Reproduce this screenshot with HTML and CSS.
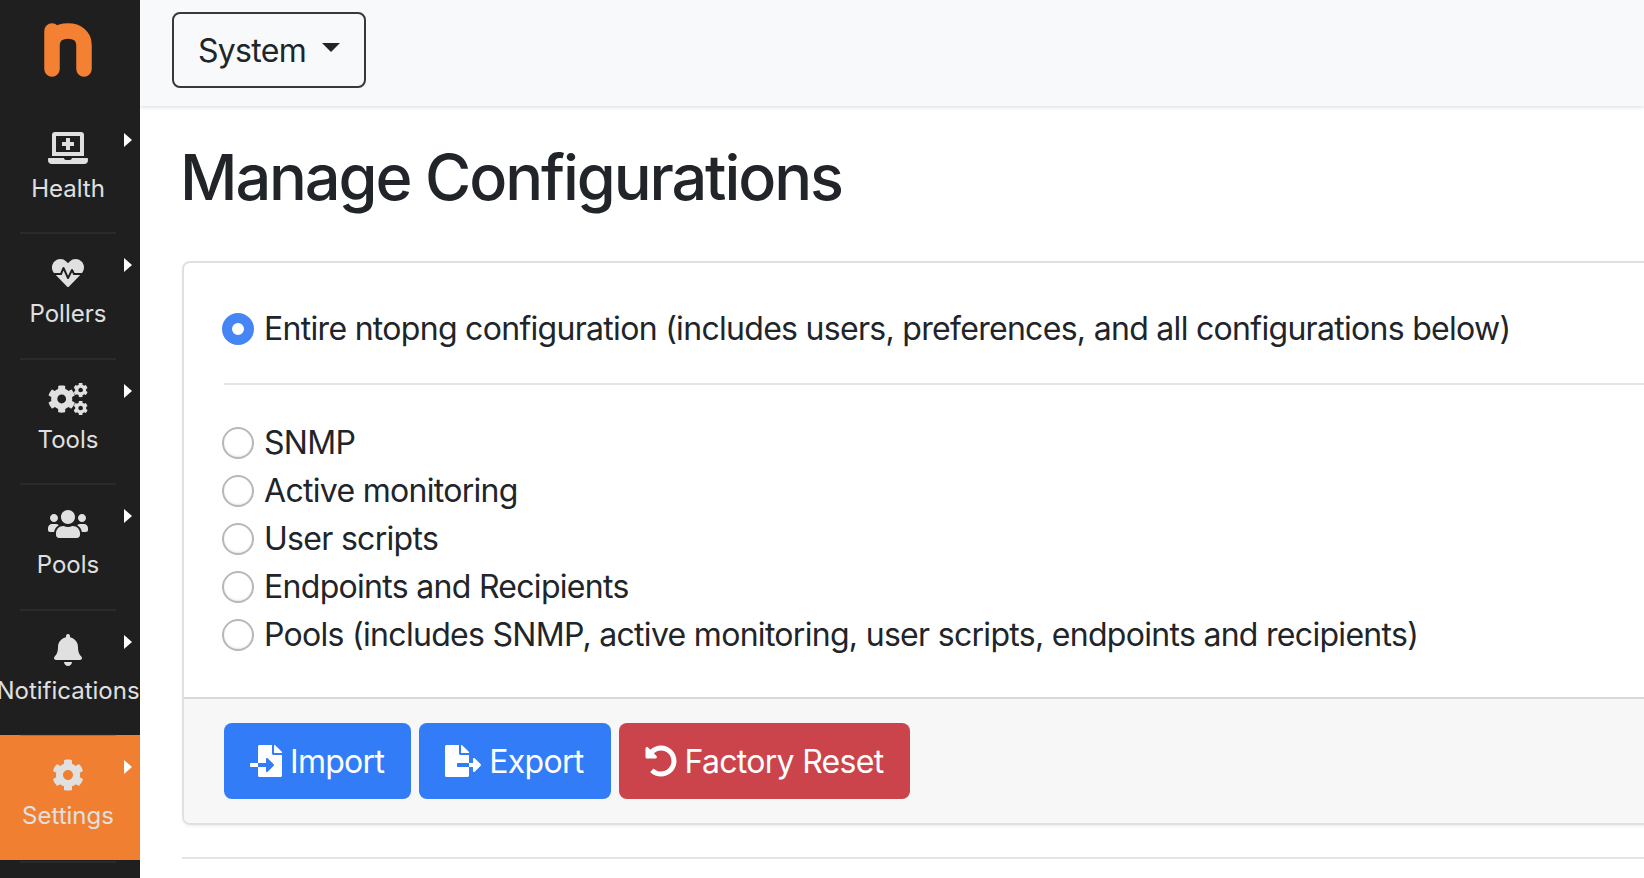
FILE: index.html
```html
<!DOCTYPE html>
<html lang="en">
<head>
    <meta charset="UTF-8">
    <meta name="viewport" content="width=device-width, initial-scale=1.0">
    <title>Manage Configurations</title>
    <link rel="stylesheet" href="styles.css">
</head>
<body>
    <svg class="defs" width="0" height="0">
        <symbol id="cog" viewBox="0 0 512 512"><path d="M487.4 315.7l-42.6-24.6c4.3-23.2 4.3-47 0-70.2l42.6-24.6c4.9-2.8 7.1-8.6 5.5-14-11.1-35.6-30-67.8-54.7-94.6-3.8-4.1-10-5.1-14.8-2.3L380.8 110c-17.9-15.4-38.5-27.3-60.8-35.1V25.8c0-5.6-3.9-10.5-9.4-11.7-36.7-8.2-74.3-7.8-109.2 0-5.5 1.2-9.4 6.1-9.4 11.7V75c-22.2 7.9-42.8 19.8-60.8 35.1L88.7 85.5c-4.9-2.8-11-1.9-14.8 2.3-24.7 26.7-43.6 58.9-54.7 94.6-1.7 5.4.6 11.2 5.5 14L67.3 221c-4.3 23.2-4.3 47 0 70.2l-42.6 24.6c-4.9 2.8-7.1 8.6-5.5 14 11.1 35.6 30 67.8 54.7 94.6 3.8 4.1 10 5.1 14.8 2.3l42.6-24.6c17.9 15.4 38.5 27.3 60.8 35.1v49.2c0 5.6 3.9 10.5 9.4 11.7 36.7 8.2 74.3 7.8 109.2 0 5.5-1.2 9.4-6.1 9.4-11.7v-49.2c22.2-7.9 42.8-19.8 60.8-35.1l42.6 24.6c4.9 2.8 11 1.9 14.8-2.3 24.7-26.7 43.6-58.9 54.7-94.6 1.5-5.5-.7-11.3-5.6-14.1zM256 336c-44.1 0-80-35.9-80-80s35.9-80 80-80 80 35.9 80 80-35.9 80-80 80z"/></symbol>
    </svg>

    <div class="layout">
        <nav class="sidebar">
            <div class="brand">
                <svg class="logo" viewBox="0 0 48 54"><path d="M8 46V8M8 22C8 13 15 8 24 8s16 5 16 14v24" fill="none" stroke="#f38033" stroke-width="15.5" stroke-linecap="round"/></svg>
            </div>

            <a class="side-item">
                <svg class="side-icon" viewBox="0 0 640 512"><path d="M232 224h56v56a8 8 0 0 0 8 8h48a8 8 0 0 0 8-8v-56h56a8 8 0 0 0 8-8v-48a8 8 0 0 0-8-8h-56v-56a8 8 0 0 0-8-8h-48a8 8 0 0 0-8 8v56h-56a8 8 0 0 0-8 8v48a8 8 0 0 0 8 8zM576 48a48.14 48.14 0 0 0-48-48H112a48.14 48.14 0 0 0-48 48v336h512zm-64 272H128V64h384zm112 96H381.54c-.74 19.81-14.71 32-32.74 32H288c-18.69 0-33.02-17.47-32.77-32H16a16 16 0 0 0-16 16v16a64.19 64.19 0 0 0 64 64h512a64.19 64.19 0 0 0 64-64v-16a16 16 0 0 0-16-16z"/></svg>
                <span>Health</span>
                <i class="caret-right"></i>
            </a>
            <a class="side-item">
                <svg class="side-icon" viewBox="0 0 640 512"><path transform="translate(64)" d="M320.2 243.8l-49.7 99.4c-6 12.1-23.4 11.7-28.9-.6l-56.9-126.3-30 71.7H60.6l182.5 186.5c7.1 7.3 18.6 7.3 25.7 0L451.4 288H342.3l-22.1-44.2zM473.7 73.9l-2.4-2.5c-51.5-52.6-135.8-52.6-187.4 0L256 100l-27.9-28.5c-51.5-52.7-135.9-52.7-187.4 0l-2.4 2.4C-10.4 123.7-12.5 203 31 256h102.4l35.9-86.2c5.4-12.9 23.6-13.2 29.4-.4l58.2 129.3 49-97.9c5.9-11.8 22.7-11.8 28.6 0l27.6 55.2H481c43.5-53 41.4-132.3-7.3-182.1z"/></svg>
                <span>Pollers</span>
                <i class="caret-right"></i>
            </a>
            <a class="side-item">
                <svg class="side-icon" viewBox="0 0 640 512">
                    <use href="#cog" x="-6" y="31" width="450" height="450"/>
                    <use href="#cog" x="404" y="-6" width="236" height="236"/>
                    <use href="#cog" x="404" y="282" width="236" height="236"/>
                </svg>
                <span>Tools</span>
                <i class="caret-right"></i>
            </a>
            <a class="side-item">
                <svg class="side-icon" viewBox="0 0 640 512"><path d="M96 224c35.3 0 64-28.7 64-64s-28.7-64-64-64-64 28.7-64 64 28.7 64 64 64zm448 0c35.3 0 64-28.7 64-64s-28.7-64-64-64-64 28.7-64 64 28.7 64 64 64zm32 32h-64c-17.6 0-33.5 7.1-45.1 18.6 40.3 22.1 68.9 62 75.1 109.4h66c17.7 0 32-14.3 32-32v-32c0-35.3-28.7-64-64-64zm-256 0c61.9 0 112-50.1 112-112S381.9 32 320 32 208 82.1 208 144s50.1 112 112 112zm76.8 32h-8.3c-20.8 10-43.9 16-68.5 16s-47.6-6-68.5-16h-8.3C179.6 288 128 339.6 128 403.2V432c0 26.5 21.5 48 48 48h288c26.5 0 48-21.5 48-48v-28.8c0-63.6-51.6-115.2-115.2-115.2zm-223.7-13.4C161.5 263.1 145.6 256 128 256H64c-35.3 0-64 28.7-64 64v32c0 17.7 14.3 32 32 32h65.9c6.3-47.4 34.9-87.3 75.2-109.4z"/></svg>
                <span>Pools</span>
                <i class="caret-right"></i>
            </a>
            <a class="side-item before-active">
                <svg class="side-icon" viewBox="0 0 640 512"><path transform="translate(96)" d="M224 512c35.32 0 63.97-28.65 63.97-64H160.03c0 35.35 28.65 64 63.97 64zm215.39-149.71c-19.32-20.76-55.47-51.99-55.47-154.29 0-77.7-54.48-139.9-127.94-155.16V32c0-17.67-14.32-32-31.98-32s-31.98 14.33-31.98 32v20.84C118.56 68.1 64.08 130.3 64.08 208c0 102.3-36.15 133.53-55.47 154.29-6 6.45-8.66 14.16-8.61 21.71.11 16.4 12.98 32 32.1 32h383.8c19.12 0 32-15.6 32.1-32 .05-7.55-2.61-15.27-8.61-21.71z"/></svg>
                <span>Notifications</span>
                <i class="caret-right"></i>
            </a>
            <a class="side-item active">
                <svg class="side-icon" viewBox="0 0 640 512"><use href="#cog" x="64" y="0" width="512" height="512"/></svg>
                <span>Settings</span>
                <i class="caret-right"></i>
            </a>
        </nav>

        <div class="content">
            <header class="topbar">
                <button class="dropdown-btn">System<i class="caret-down"></i></button>
            </header>

            <main class="page">
                <h1>Manage Configurations</h1>

                <div class="card">
                    <div class="card-body">
                        <label class="radio-row"><input type="radio" name="config" checked>Entire ntopng configuration (includes users, preferences, and all configurations below)</label>
                        <hr class="card-rule">
                        <label class="radio-row"><input type="radio" name="config">SNMP</label>
                        <label class="radio-row"><input type="radio" name="config">Active monitoring</label>
                        <label class="radio-row"><input type="radio" name="config">User scripts</label>
                        <label class="radio-row"><input type="radio" name="config">Endpoints and Recipients</label>
                        <label class="radio-row"><input type="radio" name="config">Pools (includes SNMP, active monitoring, user scripts, endpoints and recipients)</label>
                    </div>
                    <div class="card-footer">
                        <button class="btn btn-blue">
                            <svg class="btn-icon" viewBox="0 0 512 512"><path d="M16 288c-8.8 0-16 7.2-16 16v32c0 8.8 7.2 16 16 16h112v-64zm489-183L407.1 7c-4.5-4.5-10.6-7-17-7H384v128h128v-6.1c0-6.3-2.5-12.4-7-16.9zm-153 31V0H152c-13.3 0-24 10.7-24 24v264h128v-65.2c0-14.3 17.3-21.4 27.4-11.3L379 308c6.6 6.7 6.6 17.4 0 24l-95.7 96.4c-10.1 10.1-27.4 3-27.4-11.3V352H128v136c0 13.3 10.7 24 24 24h336c13.3 0 24-10.7 24-24V160H376c-13.2 0-24-10.8-24-24z"/></svg>
                            Import
                        </button>
                        <button class="btn btn-blue">
                            <svg class="btn-icon wide" viewBox="0 0 576 512"><path d="M384 121.9c0-6.3-2.5-12.4-7-16.9L279.1 7c-4.5-4.5-10.6-7-17-7H256v128h128zM571 308l-95.7-96.4c-10.1-10.1-27.4-3-27.4 11.3V288h-64v64h64v65.2c0 14.3 17.3 21.4 27.4 11.3L571 332c6.6-6.7 6.6-17.4 0-24zm-379 28v-32c0-8.8 7.2-16 16-16h176V160H248c-13.2 0-24-10.8-24-24V0H24C10.7 0 0 10.7 0 24v464c0 13.3 10.7 24 24 24h336c13.3 0 24-10.7 24-24V352H208c-8.8 0-16-7.2-16-16z"/></svg>
                            Export
                        </button>
                        <button class="btn btn-red">
                            <svg class="btn-icon" viewBox="0 0 512 512"><path d="M255.545 8c-66.269.119-126.438 26.233-170.86 68.685L48.971 40.971C33.851 25.851 8 36.559 8 57.941V192c0 13.255 10.745 24 24 24h134.059c21.382 0 32.09-25.851 16.971-40.971l-41.75-41.75c30.864-28.899 70.801-44.907 113.23-45.273 92.398-.798 170.283 73.977 169.484 169.442C423.236 348.009 349.816 424 256 424c-41.127 0-79.997-14.678-110.63-41.556-4.743-4.161-11.906-3.908-16.368.553L89.34 422.659c-4.872 4.872-4.631 12.815.482 17.433C133.798 479.813 192.074 504 256 504c136.966 0 247.999-111.033 248-247.998C504.001 119.193 392.354 7.755 255.545 8z"/></svg>
                            Factory Reset
                        </button>
                    </div>
                </div>

                <hr class="page-rule">
            </main>
        </div>
    </div>
</body>
</html>
```

FILE: styles.css
```css
html, body {
    height: 100%;
    margin: 0;
    overflow: hidden;
}
body {
    font-family: Inter, "Liberation Sans", sans-serif;
    font-size: 32px;
    line-height: 1.5;
    letter-spacing: -0.7px;
    color: #212529;
    background-color: #fff;
}
.defs {
    position: absolute;
}
.layout {
    display: flex;
    height: 100%;
}

/* sidebar */
.sidebar {
    flex: 0 0 140px;
    width: 140px;
    overflow: hidden;
    background-color: #1f1f1f;
}
.brand {
    display: flex;
    justify-content: center;
    height: 108px;
    padding: 23px 4px 0 0;
    box-sizing: border-box;
}
.logo {
    width: 48px;
    height: 54px;
}
.side-item {
    position: relative;
    display: flex;
    flex-direction: column;
    align-items: center;
    height: 125.4px;
    padding: 24px 4px 0 0;
    box-sizing: border-box;
    font-size: 24px;
    line-height: 36px;
    letter-spacing: 0;
    color: #e0e0e0;
    white-space: nowrap;
}
.side-item::after {
    content: "";
    position: absolute;
    z-index: 1;
    left: 20px;
    right: 24px;
    bottom: -1px;
    height: 2px;
    background-color: #2a2a2a;
}
.side-item.before-active::after {
    background-color: rgba(60, 60, 60, 0.3);
}
.side-item.active {
    background-color: #f17f32;
}
.side-item.active::after {
    bottom: -3px;
}
.side-icon {
    width: 40px;
    height: 32px;
    margin-bottom: 7px;
    fill: #e0e0e0;
    flex: none;
}
.caret-right {
    position: absolute;
    top: 25px;
    left: 124px;
    width: 0;
    height: 0;
    border-top: 7px solid transparent;
    border-bottom: 7px solid transparent;
    border-left: 8px solid #fff;
}

/* top bar */
.content {
    flex: 1;
    min-width: 0;
    overflow: hidden;
}
.topbar {
    display: flex;
    align-items: center;
    height: 106px;
    padding: 0 0 6px 32px;
    box-sizing: border-box;
    background-color: #f8f9fa;
    box-shadow: 0 1px 4px rgba(0, 0, 0, 0.15);
}
.dropdown-btn {
    display: flex;
    align-items: center;
    width: 194px;
    height: 76px;
    padding: 2px 24px 0;
    box-sizing: border-box;
    border: 2px solid #343a40;
    border-radius: 8px;
    background: transparent;
    font: inherit;
    letter-spacing: inherit;
    color: #212529;
}
.caret-down {
    margin: -8px 0 0 16px;
    width: 0;
    height: 0;
    border-top: 9px solid #212529;
    border-left: 9px solid transparent;
    border-right: 9px solid transparent;
}

/* page */
.page {
    width: 1700px;
    padding: 34px 0 0 42px;
}
h1 {
    margin: 0 0 45px -2px;
    font-size: 63px;
    font-weight: 500;
    line-height: 1.2;
    letter-spacing: -2.1px;
}
.card {
    border: 2px solid #e0e0e0;
    border-radius: 8px;
    box-shadow: 0 2px 3px rgba(0, 0, 0, 0.05);
}
.card-body {
    padding: 42px 40px 38px 38px;
}
.radio-row {
    display: flex;
    align-items: center;
    height: 48px;
}
.radio-row input {
    appearance: none;
    flex: none;
    width: 32px;
    height: 32px;
    margin: 0 10px 0 0;
    border: 2px solid #b8b8b8;
    border-radius: 50%;
    background: #fff;
    box-shadow: inset 0 -1px 2px rgba(0, 0, 0, 0.08);
}
.radio-row input:checked {
    border: 10px solid #4585f5;
    box-shadow: none;
}
.card-rule {
    margin: 30px 0 34px 2px;
    border: 0;
    border-top: 2px solid #e5e5e5;
}
.card-footer {
    display: flex;
    gap: 8px;
    padding: 24px 40px;
    border-top: 2px solid #d9d9d9;
    background-color: #f7f7f7;
    border-radius: 0 0 6px 6px;
}
.btn {
    display: flex;
    align-items: center;
    gap: 8px;
    height: 76px;
    padding: 2px 27px 0 26px;
    border: 0;
    border-radius: 8px;
    font: inherit;
    letter-spacing: inherit;
    color: #fff;
}
.btn-blue {
    background-color: #327df7;
}
.btn-red {
    background-color: #cb444c;
}
.btn-icon {
    width: 32px;
    height: 32px;
    margin-top: -2px;
    fill: #fff;
    flex: none;
}
.btn-icon.wide {
    width: 36px;
}
.page-rule {
    margin: 32px 0 0;
    border: 0;
    border-top: 2px solid #e5e5e5;
}
```
